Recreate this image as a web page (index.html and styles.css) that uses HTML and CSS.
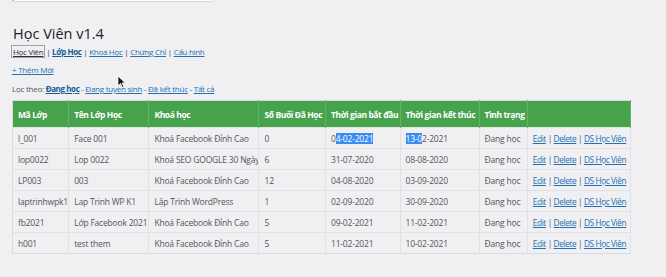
FILE: index.html
```html
<!DOCTYPE html>
<html lang="vi">
<head>
  <meta charset="UTF-8">
  <title>Học Viên v1.4</title>
  <link rel="stylesheet" href="styles.css">
</head>
<body>

<div class="notice"></div>

<div class="wrap">
  <h1 class="page-title">Học Viên v1.4</h1>

  <div class="subnav">
    <a href="#" class="focused">Học Viên</a> |
    <a href="#" class="current">Lớp Học</a> |
    <a href="#">Khoá Học</a> |
    <a href="#">Chứng Chỉ</a> |
    <a href="#">Cấu hình</a>
  </div>

  <div class="add-new"><a href="#">+ Thêm Mới</a></div>

  <div class="filter">
    Lọc theo:
    <a href="#" class="current">Đang học</a> -
    <a href="#">Đang tuyển sinh</a> -
    <a href="#">Đã kết thúc</a> -
    <a href="#">Tất cả</a>
  </div>

  <table class="class-table">
    <colgroup>
      <col class="c1"><col class="c2"><col class="c3"><col class="c4">
      <col class="c5"><col class="c6"><col class="c7"><col class="c8">
    </colgroup>
    <thead>
      <tr>
        <th>Mã Lớp</th>
        <th>Tên Lớp Học</th>
        <th>Khoá học</th>
        <th>Số Buổi Đã Học</th>
        <th>Thời gian bắt đầu</th>
        <th>Thời gian kết thúc</th>
        <th>Tình trạng</th>
        <th></th>
      </tr>
    </thead>
    <tbody>
      <tr>
        <td>l_001</td><td>Face 001</td><td>Khoá Facebook Đỉnh Cao</td><td>0</td>
        <td>0<span class="sel">4-02-2021</span></td><td><span class="sel">13-0</span>2-2021</td><td>Đang học</td>
        <td class="actions"><a href="#">Edit</a> | <a href="#">Delete</a> | <a href="#">DS Học Viên</a></td>
      </tr>
      <tr>
        <td>lop0022</td><td>Lop 0022</td><td>Khoá SEO GOOGLE 30 Ngày</td><td>6</td>
        <td>31-07-2020</td><td>08-08-2020</td><td>Đang học</td>
        <td class="actions"><a href="#">Edit</a> | <a href="#">Delete</a> | <a href="#">DS Học Viên</a></td>
      </tr>
      <tr>
        <td>LP003</td><td>003</td><td>Khoá Facebook Đỉnh Cao</td><td>12</td>
        <td>04-08-2020</td><td>03-09-2020</td><td>Đang học</td>
        <td class="actions"><a href="#">Edit</a> | <a href="#">Delete</a> | <a href="#">DS Học Viên</a></td>
      </tr>
      <tr>
        <td>laptrinhwpk1</td><td>Lap Trinh WP K1</td><td>Lập Trình WordPress</td><td>1</td>
        <td>02-09-2020</td><td>30-09-2020</td><td>Đang học</td>
        <td class="actions"><a href="#">Edit</a> | <a href="#">Delete</a> | <a href="#">DS Học Viên</a></td>
      </tr>
      <tr>
        <td>fb2021</td><td>Lớp Facebook 2021</td><td>Khoá Facebook Đỉnh Cao</td><td>5</td>
        <td>09-02-2021</td><td>11-02-2021</td><td>Đang học</td>
        <td class="actions"><a href="#">Edit</a> | <a href="#">Delete</a> | <a href="#">DS Học Viên</a></td>
      </tr>
      <tr>
        <td>h001</td><td>test them</td><td>Khoá Facebook Đỉnh Cao</td><td>5</td>
        <td>11-02-2021</td><td>10-02-2021</td><td>Đang học</td>
        <td class="actions"><a href="#">Edit</a> | <a href="#">Delete</a> | <a href="#">DS Học Viên</a></td>
      </tr>
    </tbody>
  </table>
</div>

<!-- mouse pointer caught in the screenshot -->
<svg class="pointer" width="9" height="13" viewBox="0 0 9 13">
  <path d="M1 1 L1 11 L3.5 8.5 L5.5 12.5 L7 11.8 L5 8 L8.3 8 Z" fill="#111" stroke="#fff" stroke-width="0.8"/>
</svg>

</body>
</html>
```

FILE: styles.css
```css
body {
  margin: 0;
  background-color: #f0eff1;
  color: #3c434a;
  font-family: "Open Sans", "Noto Sans", sans-serif;
  font-size: 8px;
  letter-spacing: -0.25px;
  position: relative;
}
a {
  color: #2271b1;
  text-decoration: underline;
}
.notice {
  margin-left: 12px;
  width: 199px;
  height: 1px;
  background-color: #fdfdfd;
  border-left: 2px solid #f0c33c;
  box-shadow: 0 1px 1px rgba(0,0,0,0.12);
}
.wrap {
  padding: 0 12px;
}
.page-title {
  margin: 22px 0 0 1px;
  font-size: 14.5px;
  font-weight: 400;
  color: #1d2327;
  line-height: 22px;
  letter-spacing: 0;
}
.subnav {
  line-height: 13px;
  color: #3c434a;
  letter-spacing: -0.3px;
}
.subnav a.focused {
  color: #2c3338;
  outline: 1px solid #9ca2a7;
  box-shadow: 0 0 0 1px #d7dbe0;
  padding: 0 1px;
}
.subnav a.current,
.filter a.current {
  font-weight: 700;
  color: #135e96;
  letter-spacing: -0.4px;
}
.add-new {
  margin-top: 5px;
  line-height: 13px;
}
.filter {
  margin-top: 6px;
  line-height: 13px;
  color: #50575e;
}
.class-table {
  margin-top: 5px;
  width: 619px;
  border-collapse: collapse;
  table-layout: fixed;
  border: 1px solid #dcdcde;
  font-size: 8.5px;
  letter-spacing: -0.2px;
}
.c1 { width: 49px; }
.c2 { width: 70px; }
.c3 { width: 96px; }
.c4 { width: 58px; }
.c5 { width: 65px; }
.c6 { width: 69px; }
.c7 { width: 42px; }
.c8 { width: 90px; }
.class-table th {
  background-color: #46a24b;
  color: #ffffff;
  font-weight: 700;
  text-align: left;
  height: 26px;
  padding: 0 5px;
  border-right: 1px solid #5fb463;
  white-space: nowrap;
  letter-spacing: -0.4px;
}
.class-table td {
  height: 20px;
  padding: 0 5px;
  border-top: 1px solid #e2e2e4;
  border-right: 1px solid #e2e2e4;
  color: #50575e;
  white-space: nowrap;
  overflow: hidden;
}
.class-table .actions {
  color: #50575e;
  font-size: 8.3px;
  letter-spacing: -0.4px;
}
.sel {
  background-color: #3a8df0;
  color: #ffffff;
}
.pointer {
  position: absolute;
  left: 117px;
  top: 75px;
}
```
